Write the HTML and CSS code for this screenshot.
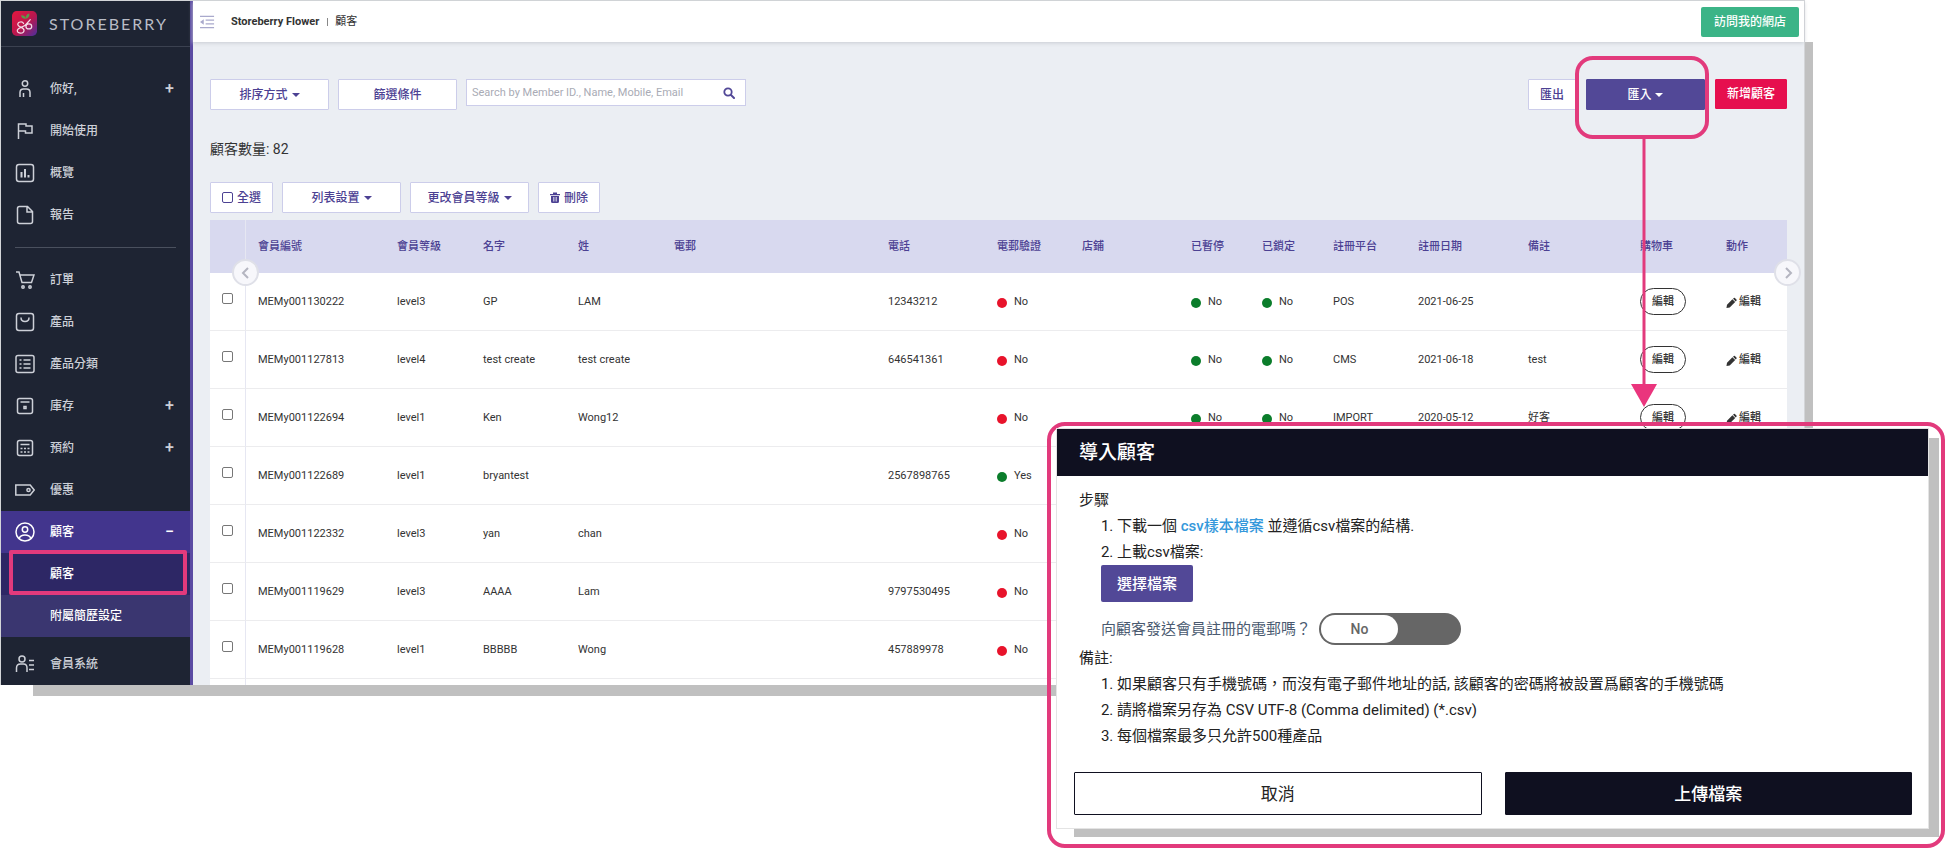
FILE: index.html
```html
<!DOCTYPE html>
<html lang="zh-Hant">
<head>
<meta charset="utf-8">
<meta name="viewport" content="width=device-width, initial-scale=1">
<title>Storeberry Flower | 顧客</title>
<link rel="stylesheet" href="styles.css">
</head>
<body>
<svg class="sprite" aria-hidden="true">
  <symbol id="pencil" viewBox="0 0 12 12"><path d="M.5 11.500l.6-3.500L7 2l3 3-6 6z M7.700 1.400l.8-.8q.6-.5 1.200 0l1.700 1.700q.5.600 0 1.200l-.8.8z" fill="currentColor"/></symbol>
</svg>
<div class="stage">
  <div class="app">
    <aside class="sidebar">
      <div class="brand">
        <svg class="brand-logo" viewBox="0 0 26 26" aria-hidden="true">
          <defs><linearGradient id="berry" x1="0" y1="0" x2="1" y2="1"><stop offset="0" stop-color="#e5173f"/><stop offset=".55" stop-color="#b8174f"/><stop offset="1" stop-color="#4a2fa0"/></linearGradient></defs>
          <rect width="26" height="26" rx="5" fill="url(#berry)"/>
          <path d="M14 8C10.500 8.500 9.500 6 9.500 4.500 12.500 4.500 14 5.500 14 8zM14 8c0-3 1.500-5 4-5.500 .5 3-1 5-4 5.500z" fill="#5a9a4a"/>
          <path d="M12 13C11 10.500 6 11 6 14c0 3 6.500 2.500 6.500 6 0 4-7 4-7 .5 0-3.500 7-3.500 9-6.500l4.500-5M14.500 16c0-3.500 6-3.500 6 0s-6 3.500-6 0z" fill="none" stroke="#f3dbe6" stroke-width="1.300" stroke-linecap="round"/>
        </svg>
        <span class="brand-name">STOREBERRY</span>
      </div>
      <nav>
        <ul class="menu">
          <li><a class="item" href="#"><svg class="icon" viewBox="0 0 20 20"><circle cx="10" cy="4.500" r="2.700"/><path d="M5 18v-4.500q0-3.500 3.500-3.500h3q3.500 0 3.500 3.500V18M8.500 14v4"/></svg>你好,<span class="sign">+</span></a></li>
          <li><a class="item" href="#"><svg class="icon" viewBox="0 0 20 20"><path d="M3.500 18V3h7.500v2h6v7h-6.500v-2h-7"/></svg>開始使用</a></li>
          <li><a class="item" href="#"><svg class="icon" viewBox="0 0 20 20"><rect x="1.500" y="1.500" width="17" height="17" rx="2.500"/><path d="M6.500 9v5.500M10 6v8.500M13.500 12v2.500" stroke-width="2"/></svg>概覽</a></li>
          <li><a class="item" href="#"><svg class="icon" viewBox="0 0 20 20"><path d="M4.500 1.500h8l5 5v10q0 2-2 2h-11q-2 0-2-2v-13q0-2 2-2zM12 2v5h5"/></svg>報告</a></li>
        </ul>
        <hr class="rule">
        <ul class="menu">
          <li><a class="item" href="#"><svg class="icon" viewBox="0 0 20 20"><path d="M1 2h3l3 10.500h9.500L19 5H5"/><circle cx="8" cy="17" r="1.200"/><circle cx="15" cy="17" r="1.200"/></svg>訂單</a></li>
          <li><a class="item" href="#"><svg class="icon" viewBox="0 0 20 20"><rect x="1.500" y="1.500" width="17" height="17" rx="2.500"/><path d="M6 5.500q0 4 4 4t4-4"/></svg>產品</a></li>
          <li><a class="item" href="#"><svg class="icon" viewBox="0 0 20 20"><rect x="1" y="1.500" width="18" height="17" rx="2"/><path d="M8.500 6h7M8.500 10h7M8.500 14h7M4.500 6h2M4.500 10h2M4.500 14h2"/></svg>產品分類</a></li>
          <li><a class="item" href="#"><svg class="icon" viewBox="0 0 20 20"><rect x="2.500" y="2.500" width="15" height="15" rx="2"/><path d="M5.500 6h9"/><rect x="9" y="10.500" width="2" height="2"/></svg>庫存<span class="sign">+</span></a></li>
          <li><a class="item" href="#"><svg class="icon" viewBox="0 0 20 20"><rect x="2.500" y="2.500" width="15" height="15" rx="2"/><path d="M5.500 6.500h9"/><path d="M5.500 10.500h9M5.500 14h9" stroke-dasharray="2 1.500"/></svg>預約<span class="sign">+</span></a></li>
          <li><a class="item" href="#"><svg class="icon" viewBox="0 0 20 20"><path d="M.8 5h14.400l4 5-4 5H.8z"/><circle cx="13.500" cy="10" r="1.600"/></svg>優惠</a></li>
          <li>
            <a class="item item-open" href="#"><svg class="icon" viewBox="0 0 20 20"><circle cx="10" cy="10" r="9"/><circle cx="10" cy="7.500" r="2.700"/><path d="M4 16.500q1.500-3.500 6-3.500t6 3.500"/></svg>顧客<span class="sign">−</span></a>
            <ul class="submenu">
              <li class="marked"><a class="item item-current" href="#" aria-current="page">顧客</a></li>
              <li><a class="item" href="#">附屬簡歷設定</a></li>
            </ul>
          </li>
          <li><a class="item" href="#"><svg class="icon" viewBox="0 0 20 20"><circle cx="7" cy="5" r="3"/><path d="M1.500 18v-4q0-4 4-4h3q3.500 0 3.500 4v4M14 6.500h5M14 11h5M14 15.500h5"/></svg>會員系統</a></li>
        </ul>
      </nav>
    </aside>

    <div class="page">
      <header class="topbar">
        <button class="collapse" type="button" aria-label="收起選單"><svg viewBox="0 0 16 14"><path d="M0 1h15M6 5h9M6 9h9M0 13h15" stroke="currentColor" stroke-width="1.500"/><path d="M4 4v6L0 7z" fill="currentColor"/></svg></button>
        <strong>Storeberry Flower</strong>
        <span class="bar" aria-hidden="true"></span>
        <span>顧客</span>
        <a class="visit" href="#">訪問我的網店</a>
      </header>

      <main class="content">
        <div class="toolbar">
          <button class="btn wide caret" type="button">排序方式</button>
          <button class="btn wide" type="button">篩選條件</button>
          <form class="search">
            <input type="search" aria-label="Search" placeholder="Search by Member ID., Name, Mobile, Email">
            <button type="button" aria-label="搜尋"><svg viewBox="0 0 12 12"><circle cx="5" cy="5" r="3.700" fill="none" stroke="currentColor" stroke-width="1.800"/><path d="M8 8l3 3" stroke="currentColor" stroke-width="2" stroke-linecap="round"/></svg></button>
          </form>
          <div class="actions">
            <button class="btn" type="button">匯出</button>
            <div class="import">
              <button class="btn wide caret filled" type="button">匯入</button>
              <span class="ring" aria-hidden="true"></span>
              <svg class="arrow" viewBox="0 0 26 269" aria-hidden="true"><path d="M13 0v248" stroke="#e23a7c" stroke-width="3"/><path d="M0 246h26l-13 23z" fill="#ea357d"/></svg>
            </div>
            <button class="btn create" type="button">新增顧客</button>
          </div>
        </div>

        <p class="count">顧客數量: 82</p>

        <div class="toolbar">
          <label class="btn select-all"><input class="tick" type="checkbox">全選</label>
          <button class="btn wide caret" type="button">列表設置</button>
          <button class="btn wide caret" type="button">更改會員等級</button>
          <button class="btn" type="button"><svg class="bin" viewBox="0 0 10 11"><path d="M0 2h3V.5h4V2h3v1.200H0zM1 4h8v5.500q0 1.500-1.500 1.500h-5Q1 11 1 9.500z" fill="currentColor"/><path d="M3.500 5v4.500M5 5v4.500M6.500 5v4.500" stroke="#fff" stroke-width=".6"/></svg>刪除</button>
        </div>

        <div class="grid">
          <button class="scroll scroll-left" type="button" aria-label="向左"><svg viewBox="0 0 12 12"><path d="M8 1L3 6l5 5"/></svg></button>
          <button class="scroll scroll-right" type="button" aria-label="向右"><svg viewBox="0 0 12 12"><path d="M4 1l5 5-5 5"/></svg></button>
          <table>
            <colgroup><col class="c36"><col class="c139"><col class="c86"><col class="c95"><col class="c96"><col class="c214"><col class="c109"><col class="c85"><col class="c109"><col class="c71"><col class="c71"><col class="c85"><col class="c110"><col class="c112"><col class="c86"><col class="c73"></colgroup>
            <thead><tr><th></th><th>會員編號</th><th>會員等級</th><th>名字</th><th>姓</th><th>電郵</th><th>電話</th><th>電郵驗證</th><th>店鋪</th><th>已暫停</th><th>已鎖定</th><th>註冊平台</th><th>註冊日期</th><th>備註</th><th>購物車</th><th>動作</th></tr></thead>
            <tbody>
              <tr><td><input class="tick" type="checkbox" aria-label="MEMy001130222"></td><td>MEMy001130222</td><td>level3</td><td>GP</td><td>LAM</td><td></td><td>12343212</td><td><span class="dot red"></span>No</td><td></td><td><span class="dot"></span>No</td><td><span class="dot"></span>No</td><td>POS</td><td>2021-06-25</td><td></td><td><button class="pill" type="button">編輯</button></td><td><a class="edit" href="#"><svg><use href="#pencil"/></svg>編輯</a></td></tr>
              <tr><td><input class="tick" type="checkbox" aria-label="MEMy001127813"></td><td>MEMy001127813</td><td>level4</td><td>test create</td><td>test create</td><td></td><td>646541361</td><td><span class="dot red"></span>No</td><td></td><td><span class="dot"></span>No</td><td><span class="dot"></span>No</td><td>CMS</td><td>2021-06-18</td><td>test</td><td><button class="pill" type="button">編輯</button></td><td><a class="edit" href="#"><svg><use href="#pencil"/></svg>編輯</a></td></tr>
              <tr><td><input class="tick" type="checkbox" aria-label="MEMy001122694"></td><td>MEMy001122694</td><td>level1</td><td>Ken</td><td>Wong12</td><td></td><td></td><td><span class="dot red"></span>No</td><td></td><td><span class="dot"></span>No</td><td><span class="dot"></span>No</td><td>IMPORT</td><td>2020-05-12</td><td>好客</td><td><button class="pill" type="button">編輯</button></td><td><a class="edit" href="#"><svg><use href="#pencil"/></svg>編輯</a></td></tr>
              <tr><td><input class="tick" type="checkbox" aria-label="MEMy001122689"></td><td>MEMy001122689</td><td>level1</td><td>bryantest</td><td></td><td></td><td>2567898765</td><td><span class="dot"></span>Yes</td><td colspan="8"></td></tr>
              <tr><td><input class="tick" type="checkbox" aria-label="MEMy001122332"></td><td>MEMy001122332</td><td>level3</td><td>yan</td><td>chan</td><td></td><td></td><td><span class="dot red"></span>No</td><td colspan="8"></td></tr>
              <tr><td><input class="tick" type="checkbox" aria-label="MEMy001119629"></td><td>MEMy001119629</td><td>level3</td><td>AAAA</td><td>Lam</td><td></td><td>9797530495</td><td><span class="dot red"></span>No</td><td colspan="8"></td></tr>
              <tr><td><input class="tick" type="checkbox" aria-label="MEMy001119628"></td><td>MEMy001119628</td><td>level1</td><td>BBBBB</td><td>Wong</td><td></td><td>457889978</td><td><span class="dot red"></span>No</td><td colspan="8"></td></tr>
            </tbody>
            <tfoot><tr><td></td><td colspan="15"></td></tr></tfoot>
          </table>
        </div>
      </main>
    </div>
  </div>

  <section class="dialog" role="dialog" aria-labelledby="dialog-title">
    <div class="panel">
      <h2 id="dialog-title">導入顧客</h2>
      <div class="steps">
        <p>步驟</p>
        <ol>
          <li>下載一個 <a href="#">csv樣本檔案</a> 並遵循csv檔案的結構.</li>
          <li>上載csv檔案:</li>
        </ol>
        <div class="upload">
          <button class="choose" type="button">選擇檔案</button>
          <div class="notify">
            <label for="notify">向顧客發送會員註冊的電郵嗎？</label>
            <span class="switch"><input id="notify" type="checkbox" role="switch"><span class="knob" aria-hidden="true">No</span></span>
          </div>
        </div>
        <p>備註:</p>
        <ol>
          <li>如果顧客只有手機號碼，而沒有電子郵件地址的話, 該顧客的密碼將被設置爲顧客的手機號碼</li>
          <li>請將檔案另存為 CSV UTF-8 (Comma delimited) (*.csv)</li>
          <li>每個檔案最多只允許500種產品</li>
        </ol>
      </div>
      <div class="choices">
        <button class="cancel" type="button">取消</button>
        <button class="confirm" type="button">上傳檔案</button>
      </div>
    </div>
  </section>
</div>
</body>
</html>
```
FILE: styles.css
```css
:root {
  --pink: #e23a7c;
  --purple: #524897;
  --line: #cccdea;
  --ink: #333;
}

* { box-sizing: border-box; }

body {
  margin: 0;
  background: #fff;
  color: var(--ink);
  font-family: Roboto, "Noto Sans CJK TC", sans-serif;
  font-size: 11px;
  line-height: 16px;
}

button, input { font: inherit; color: inherit; }
button { cursor: pointer; margin: 0; padding: 0; }
ul { list-style: none; margin: 0; padding: 0; }
a { color: inherit; text-decoration: none; }
.sprite { position: absolute; width: 0; height: 0; }

.stage {
  position: relative;
  isolation: isolate;
  min-height: 849px;
}

/* Application window */
.app {
  position: relative;
  display: flex;
  margin-right: 141px;
  border: 1px solid #d3d5d8;
  border-bottom: 0;
}
.app::before {
  content: "";
  position: absolute;
  z-index: -1;
  inset: 41px -9px -11px 32px;
  background: #c0c0c0;
}

/* Sidebar */
.sidebar {
  flex: 0 0 192px;
  background: #1e2433;
  border-right: 3px solid #5b4ba3;
  color: #cdd0d8;
}
.brand {
  display: flex;
  align-items: center;
  gap: 12px;
  height: 46px;
  padding: 0 11px;
  border-bottom: 1px solid #3b4150;
}
.brand-logo { width: 25px; height: 25px; }
.brand-name {
  font-family: Lato, sans-serif;
  font-size: 16px;
  letter-spacing: 2px;
  color: #b9bcc6;
}
.menu:first-child { padding-top: 21px; }
.item {
  position: relative;
  display: flex;
  align-items: center;
  gap: 15px;
  height: 42px;
  padding: 0 16px 0 14px;
  font-size: 12px;
  font-weight: 500;
}
.icon {
  width: 20px;
  height: 20px;
  fill: none;
  stroke: currentColor;
  stroke-width: 1.5;
}
.sign { margin-left: auto; font-size: 16px; }
.rule { margin: 11px 14px; border: 0; border-top: 1px solid #4a505e; }
.item-open { background: #42358d; color: #fff; }
.submenu { margin-bottom: 6px; background: #3a3670; color: #fff; }
.submenu .item { padding-left: 49px; }
.submenu .item-current { background: #2d2765; }
.marked { position: relative; }
.marked::after {
  content: "";
  position: absolute;
  inset: -3px 3px 0 8px;
  border: 4px solid var(--pink);
  border-radius: 2px;
}

/* Top bar */
.page {
  flex: 1;
  min-width: 0;
  display: flex;
  flex-direction: column;
  background: #ebeef3;
}
.topbar {
  display: flex;
  align-items: center;
  height: 41px;
  padding: 0 5px 0 7px;
  background: #fff;
  box-shadow: 0 1px 4px #c8ccd2;
}
.topbar strong { margin-left: 16px; font-weight: 700; }
.collapse {
  width: 15px;
  height: 14px;
  border: 0;
  background: none;
  color: #a9a9cc;
}
.collapse svg { display: block; width: 15px; height: 14px; }
.bar { width: 1px; height: 8px; margin: 0 7px 0 8px; background: #888; }
.visit {
  margin-left: auto;
  padding: 7px 13px;
  border-radius: 2px;
  background: #3bb487;
  color: #fff;
  font-size: 12px;
  font-weight: 500;
}

/* Content */
.content { padding: 37px 17px 0; }
.toolbar { display: flex; align-items: flex-start; gap: 9px; }
.btn {
  display: inline-flex;
  align-items: center;
  justify-content: center;
  height: 31px;
  padding: 0 11px;
  border: 1px solid var(--line);
  border-radius: 1px;
  background: #fff;
  color: #4c4193;
  font-size: 12px;
  font-weight: 500;
}
.wide { width: 119px; }
.caret::after {
  content: "";
  margin-left: 4px;
  border: 4px solid transparent;
  border-top-color: currentColor;
  border-bottom: 0;
}
.filled { background: var(--purple); border-color: var(--purple); color: #fff; }
.create { height: 30px; background: #e60f4e; border-color: #e60f4e; color: #fff; }
.search {
  display: flex;
  width: 280px;
  height: 27px;
  background: #fff;
  border: 1px solid var(--line);
}
.search input {
  flex: 1;
  min-width: 0;
  padding: 0 5px;
  border: 0;
  outline: 0;
  background: none;
  appearance: none;
}
.search input::placeholder { color: #a9abb5; }
.search button { width: 32px; border: 0; background: none; color: var(--purple); }
.search svg { display: block; width: 12px; height: 12px; margin: auto; }
.actions { display: flex; gap: 10px; margin-left: auto; }
.import { position: relative; }
.ring {
  position: absolute;
  inset: -23px -4px -29px -11px;
  border: 4px solid var(--pink);
  border-radius: 18px;
  pointer-events: none;
}
.arrow {
  position: absolute;
  top: 59px;
  left: 45px;
  z-index: 2;
  width: 26px;
  height: 269px;
  pointer-events: none;
}
.count { margin: 29px 0 22px; font-size: 14px; line-height: 21px; }
.select-all { gap: 4px; }
.tick {
  appearance: none;
  width: 11px;
  height: 11px;
  margin: 0;
  border: 1px solid #777;
  border-radius: 2px;
  background: #fff;
}
.select-all .tick { border-color: #4c4193; }
.bin { width: 10px; height: 11px; margin-right: 4px; }

/* Customer table */
.grid { position: relative; margin-top: 7px; }
table {
  width: 100%;
  table-layout: fixed;
  border-collapse: separate;
  border-spacing: 0;
  background: #fff;
}
th, td { padding: 0 0 0 12px; text-align: left; white-space: nowrap; }
th { height: 53px; background: #d8d9ef; color: #4c4193; font-weight: 500; }
td { height: 58px; border-bottom: 1px solid #ececee; }
th:first-child, td:first-child { border-right: 1px solid #e6e7f2; }
td:first-child .tick { display: block; margin-bottom: 7px; }
tfoot td { height: 6px; border-bottom: 0; }
.c36 { width: 36px; }
.c71 { width: 71px; }
.c73 { width: 73px; }
.c85 { width: 85px; }
.c86 { width: 86px; }
.c95 { width: 95px; }
.c96 { width: 96px; }
.c109 { width: 109px; }
.c110 { width: 110px; }
.c112 { width: 112px; }
.c139 { width: 139px; }
.c214 { width: 214px; }
.dot {
  display: inline-block;
  width: 10px;
  height: 10px;
  margin-right: 7px;
  border-radius: 50%;
  background: #0b7d2b;
  vertical-align: -3px;
}
.red { background: #e8132b; }
.pill {
  width: 46px;
  height: 27px;
  border: 1px solid #333;
  border-radius: 14px;
  background: #fff;
  font-weight: 500;
}
.edit { display: flex; align-items: center; gap: 2px; font-weight: 500; }
.edit svg { width: 11px; height: 12px; margin-top: 3px; }
.scroll {
  position: absolute;
  top: 39px;
  width: 27px;
  height: 27px;
  border: 2px solid #dfe0e8;
  border-radius: 50%;
  background: #f7f7fb;
}
.scroll svg {
  display: block;
  width: 12px;
  height: 12px;
  margin: auto;
  fill: none;
  stroke: #b4b5c0;
  stroke-width: 2;
}
.scroll-left { left: 22px; }
.scroll-right { right: -14px; }

/* Import dialog */
.dialog {
  position: absolute;
  z-index: 3;
  top: 422px;
  right: 1px;
  width: 898px;
  padding: 3px 13px 16px 6px;
  border: 4px solid var(--pink);
  border-radius: 18px;
}
.panel {
  position: relative;
  background: #fff;
  box-shadow: 0 0 0 1px #e4e4e4;
  color: #222;
}
.panel::before {
  content: "";
  position: absolute;
  z-index: -1;
  inset: 9px -11px -9px 17px;
  background: #c0c0c0;
}
.panel h2 {
  margin: 0;
  padding: 0 22px;
  background: #0f1020;
  color: #fff;
  font-size: 19px;
  font-weight: 500;
  line-height: 47px;
}
.steps { padding: 11px 22px 23px; font-size: 15px; line-height: 26px; }
.steps p, .steps ol { margin: 0; }
.steps ol { padding-left: 38px; }
.steps a { color: #3498db; font-weight: 500; }
.upload { padding-left: 22px; }
.choose {
  height: 37px;
  padding: 0 16px;
  border: 0;
  border-radius: 2px;
  background: var(--purple);
  color: #fff;
  font-weight: 500;
}
.upload > button { display: block; }
.notify { display: flex; align-items: center; gap: 8px; margin-top: 11px; color: #4a5a70; }
.switch {
  position: relative;
  display: block;
  width: 142px;
  height: 32px;
  padding: 2px;
  border-radius: 16px;
  background: #666;
}
.switch input { position: absolute; inset: 0; width: 100%; height: 100%; margin: 0; opacity: 0; }
.knob {
  display: block;
  width: 77px;
  border-radius: 14px;
  background: #fff;
  color: #666;
  font-size: 14px;
  font-weight: 500;
  line-height: 28px;
  text-align: center;
}
.choices { display: flex; gap: 23px; padding: 0 16px 13px 17px; }
.choices button {
  flex: 1;
  height: 43px;
  border: 1px solid #0f1020;
  border-radius: 1px;
  background: #fff;
  font-size: 17px;
}
.choices .confirm { background: #0f1020; color: #fff; font-weight: 500; }
```
